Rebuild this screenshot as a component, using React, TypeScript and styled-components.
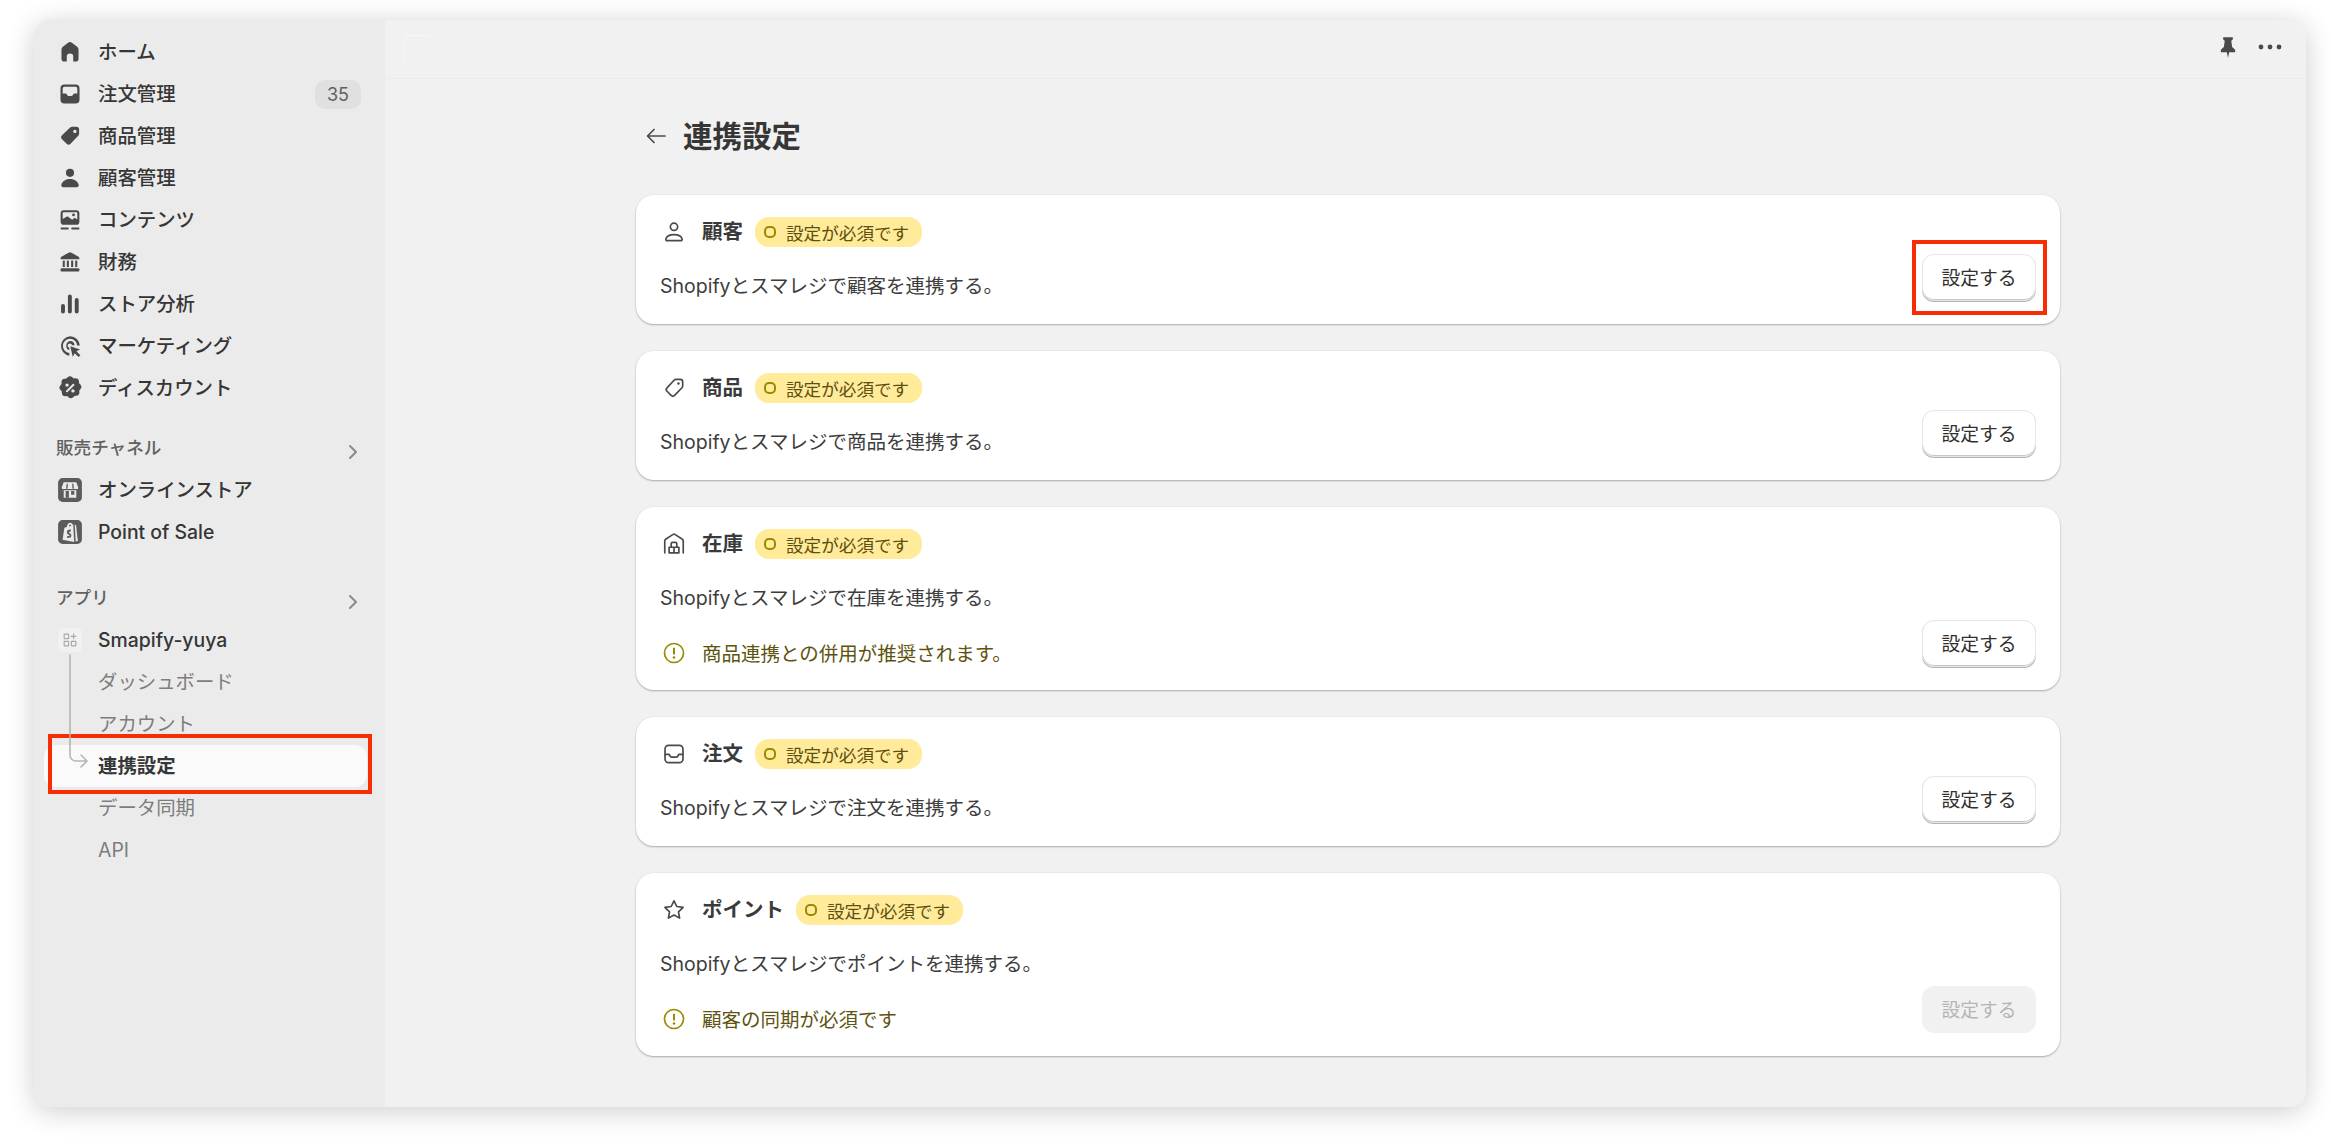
import React from "react";
import styled, { createGlobalStyle } from "styled-components";

const Global = createGlobalStyle`
  html, body { margin: 0; padding: 0; background: #fff; }
  #root { width: 2331px; height: 1148px; }
  * { box-sizing: border-box; }
  body { font-family: Inter, "Noto Sans CJK JP", sans-serif; color: #303030; overflow: hidden; }
`;

const Page = styled.div`
  width: 2331px;
  height: 1148px;
  padding: 20px 25px 41px 34px;
`;
const Win = styled.div`
  display: flex;
  height: 100%;
  border-radius: 16px;
  overflow: hidden;
  background: #f1f1f1;
  box-shadow: 0 4px 28px rgba(0, 0, 0, 0.2);
`;
const Sidebar = styled.nav`
  width: 351px;
  flex: none;
  background: #ebebeb;
  padding: 11px 18px 0 10px;
`;
const Group = styled.div<{ $mt?: number }>`
  position: relative;
  margin-top: ${(p) => p.$mt ?? 0}px;
`;
const Item = styled.div<{ $active?: boolean }>`
  position: relative;
  display: flex;
  align-items: center;
  height: 42px;
  padding: 0 6px 0 14px;
  gap: 16px;
  border-radius: 12px;
  background: ${(p) => (p.$active ? "#fafafa" : "transparent")};
`;
const IconSlot = styled.span`
  width: 24px;
  height: 24px;
  flex: none;
  display: flex;
  align-items: center;
  justify-content: center;
`;
const ItemText = styled.span<{ $sub?: boolean; $strong?: boolean }>`
  flex: 1;
  font-size: 19.4px;
  line-height: 26px;
  font-weight: ${(p) => (p.$strong ? 600 : p.$sub ? 400 : 500)};
  color: ${(p) => (p.$sub ? "#7d7d7d" : "#363636")};
`;
const SubItem = styled(Item)`
  padding-left: 54px;
`;
const Count = styled.span`
  width: 46px;
  height: 29px;
  border-radius: 10px;
  background: #e0e0e0;
  color: #616161;
  font-size: 18px;
  display: flex;
  align-items: center;
  justify-content: center;
`;
const SectionLabel = styled.div`
  display: flex;
  align-items: center;
  justify-content: space-between;
  height: 42px;
  padding: 0 2px 3px 12px;
  color: #616161;
  font-size: 17.6px;
  font-weight: 500;
`;
const Chevron = styled.svg`
  width: 24px;
  height: 24px;
  margin-top: 11px;
`;
const AppBox = styled.span`
  width: 24px;
  height: 24px;
  border-radius: 5px;
  background: #f1f1f1;
  display: flex;
  align-items: center;
  justify-content: center;
`;
const Tree = styled.svg`
  position: absolute;
  left: 23px;
  top: -7px;
  width: 40px;
  height: 122px;
`;
const Ring = styled.span<{ $inset: string }>`
  position: absolute;
  inset: ${(p) => p.$inset};
  border: 4px solid #f92d04;
  pointer-events: none;
`;
const Main = styled.main`
  flex: 1;
  min-width: 0;
`;
const TopBar = styled.header`
  height: 59px;
  border-bottom: 1px solid #ebebeb;
  display: flex;
  align-items: center;
  justify-content: space-between;
  padding: 0 23px 4px 19px;
`;
const Ghost = styled.span`
  width: 26px;
  height: 28px;
  border-left: 1px solid #f7f7f7;
  border-top: 1px solid #f7f7f7;
  border-radius: 4px 0 0 0;
  margin-top: 4px;
`;
const TopActions = styled.div`
  display: flex;
  align-items: center;
  gap: 16px;
`;
const Content = styled.div`
  padding: 37px 246px 0 251px;
`;
const TitleRow = styled.div`
  display: flex;
  align-items: center;
  height: 40px;
  gap: 15px;
  padding-left: 8px;
  margin-bottom: 39px;
`;
const Title = styled.h1`
  margin: 0;
  font-size: 29.5px;
  line-height: 40px;
  font-weight: 600;
  color: #363636;
`;
const CardList = styled.div`
  display: flex;
  flex-direction: column;
  gap: 27px;
`;
const Card = styled.section`
  display: flex;
  justify-content: space-between;
  align-items: flex-end;
  background: #fff;
  border-radius: 18px;
  padding: 22px 24px 23px;
  box-shadow: 0 1px 2px rgba(0, 0, 0, 0.28), 0 0 0 1px rgba(0, 0, 0, 0.025);
`;
const CardBody = styled.div`
  display: flex;
  flex-direction: column;
`;
const CardHead = styled.div`
  display: flex;
  align-items: center;
  height: 30px;
`;
const CardIcon = styled.span`
  width: 28px;
  height: 28px;
  flex: none;
  display: flex;
  align-items: center;
  justify-content: center;
  margin-right: 14px;
`;
const CardTitle = styled.h2`
  margin: 0 12px 0 0;
  font-size: 20.5px;
  font-weight: 600;
  color: #3a3a3a;
  line-height: 30px;
`;
const Badge = styled.span`
  display: flex;
  align-items: center;
  height: 30px;
  padding: 0 13px 0 9px;
  gap: 10px;
  border-radius: 14px;
  background: #ffeb99;
  color: #5e5012;
  font-size: 17.6px;
  font-weight: 400;
`;
const BadgeDot = styled.span`
  width: 12px;
  height: 12px;
  border-radius: 5px;
  border: 2px solid #998a00;
`;
const Desc = styled.p`
  margin: 25px 0 0;
  font-size: 19.5px;
  line-height: 29px;
  color: #3d3d3d;
`;
const Warn = styled.div`
  display: flex;
  align-items: center;
  margin-top: 25px;
  height: 29px;
  color: #5e5410;
  font-size: 19.5px;
`;
const BtnWrap = styled.div`
  position: relative;
`;
const Btn = styled.button<{ $off?: boolean }>`
  display: block;
  width: 114px;
  height: 47px;
  border-radius: 12px;
  font: 400 18.8px Inter, "Noto Sans CJK JP", sans-serif;
  padding: 0 0 3px;
  color: ${(p) => (p.$off ? "#b5b5b5" : "#303030")};
  background: ${(p) => (p.$off ? "#f1f1f1" : "#fff")};
  border: ${(p) => (p.$off ? "none" : "1px solid #e6e6e6")};
  box-shadow: ${(p) => (p.$off ? "none" : "0 1px 0 #b4b4b4, inset 0 -1px 0 #c6c6c6")};
`;

const Svg = styled.svg<{ $s?: number; $c?: string }>`
  width: ${(p) => p.$s ?? 28}px;
  height: ${(p) => p.$s ?? 28}px;
  flex: none;
  display: block;
  fill: ${(p) => p.$c ?? "#4a4a4a"};
`;
type IP = { s?: number; c?: string; children: React.ReactNode };
const I = ({ s, c, children }: IP) => (
  <Svg viewBox="0 0 20 20" $s={s} $c={c}>
    {children}
  </Svg>
);
const BG = "#ebebeb";

const icons = {
  home: (
    <I>
      <path d="M8.6 3.400a2.400 2.400 0 0 1 2.800 0l3.700 2.900a2.600 2.600 0 0 1 1 2v6.500a2 2 0 0 1-2 2h-1.800v-3.500a2.300 2.300 0 0 0-4.600 0v3.500H5.900a2 2 0 0 1-2-2V8.300a2.600 2.600 0 0 1 1-2z" />
    </I>
  ),
  inbox: (
    <I>
      <path d="M6 3.200h8A2.800 2.800 0 0 1 16.800 6v8a2.800 2.800 0 0 1-2.800 2.800H6A2.800 2.800 0 0 1 3.200 14V6A2.800 2.800 0 0 1 6 3.200z" />
      <path fill={BG} d="M6 4.800h8A1.200 1.200 0 0 1 15.200 6v3.700h-2a1.200 1.200 0 0 0-1 .6l-.3.600a1 1 0 0 1-.9.500H9a1 1 0 0 1-.9-.5l-.3-.6a1.200 1.200 0 0 0-1-.6h-2V6A1.200 1.200 0 0 1 6 4.800z" />
    </I>
  ),
  tag: (
    <I>
      <path fillRule="evenodd" d="M11.500 3.400h3a2 2 0 0 1 2 2v3a2 2 0 0 1-.6 1.400l-5.500 5.800a2 2 0 0 1-2.800 0l-3.300-3.300a2 2 0 0 1 0-2.800l5.800-5.500a2 2 0 0 1 1.400-.6zM13.500 5.500a1.200 1.200 0 1 0 0 2.400 1.200 1.200 0 0 0 0-2.400z" />
    </I>
  ),
  person: (
    <I>
      <circle cx="10" cy="6.300" r="2.900" />
      <path d="M10 10.800c3.300 0 5.600 1.800 6.200 4 .3 1-.5 1.800-1.400 1.800H5.200c-.9 0-1.700-.8-1.400-1.800.6-2.200 2.900-4 6.200-4z" />
    </I>
  ),
  content: (
    <I>
      <path fillRule="evenodd" d="M5.500 3h9A2.200 2.200 0 0 1 16.700 5.200v6A2.200 2.200 0 0 1 14.500 13.400h-9a2.200 2.200 0 0 1-2.200-2.200v-6A2.200 2.200 0 0 1 5.500 3zM4.800 9.300V5.200c0-.4.300-.7.700-.7h9c.4 0 .7.300.7.700v4.500l-1.800-1.300-1.900 1.400-3.300-2.500z" />
      <circle cx="12.500" cy="6.400" r="1" />
      <rect x="3.300" y="15.400" width="5.800" height="1.400" rx=".5" />
      <rect x="10.900" y="15.400" width="5.800" height="1.400" rx=".5" />
    </I>
  ),
  bank: (
    <I>
      <path d="M9 3.400a2 2 0 0 1 2 0l4.800 2.600c.5.300.9.800.9 1.400v.6H3.300v-.6c0-.6.400-1.100.9-1.400z" />
      <rect x="4.800" y="9" width="1.500" height="4.600" />
      <rect x="7.700" y="9" width="1.500" height="4.600" />
      <rect x="10.800" y="9" width="1.500" height="4.600" />
      <rect x="13.700" y="9" width="1.500" height="4.600" />
      <rect x="3.300" y="14.500" width="13.400" height="2.300" rx=".7" />
    </I>
  ),
  chart: (
    <I>
      <rect x="3.600" y="10" width="2.800" height="6.800" rx="1.400" />
      <rect x="8.500" y="3.200" width="2.800" height="13.600" rx="1.400" />
      <rect x="13.400" y="5.800" width="2.800" height="11" rx="1.400" />
    </I>
  ),
  target: (
    <I>
      <path d="M10 3a7 7 0 0 1 7 6.700h-1.900A5.100 5.100 0 1 0 9.500 15v1.900A7 7 0 0 1 10 3z" />
      <path d="M10 6.500a3.400 3.400 0 0 1 3.300 3h-1.800a1.600 1.600 0 1 0-2 1.800v1.700A3.400 3.400 0 0 1 10 6.500z" />
      <path d="M10.200 10.200l7 2.300-2.600 1.300 2.800 2.800-1.300 1.300-2.800-2.800-1.300 2.700z" />
    </I>
  ),
  discount: (
    <I>
      <path fillRule="evenodd" d="M8.300 2.400a2.500 2.500 0 0 1 3.400 0l.9.800 1.200-.1a2.500 2.500 0 0 1 2.600 2.300l.1 1.200.9.900a2.500 2.500 0 0 1 0 3.400l-.8.900.1 1.200a2.500 2.500 0 0 1-2.300 2.600l-1.200.1-.9.900a2.500 2.500 0 0 1-3.400 0l-.9-.8-1.200.1a2.500 2.500 0 0 1-2.600-2.300l-.1-1.200-.9-.9a2.500 2.500 0 0 1 0-3.400l.8-.9-.1-1.200a2.500 2.500 0 0 1 2.300-2.600l1.200-.1zM12.300 6.800 6.900 12.300l1 1 5.400-5.500zM7.900 6.700a1.200 1.200 0 1 0 0 2.400 1.200 1.200 0 0 0 0-2.400zM12.100 10.900a1.200 1.200 0 1 0 0 2.400 1.200 1.200 0 0 0 0-2.400z" />
    </I>
  ),
  store: (
    <I>
      <rect x="1.500" y="1.500" width="17" height="17" rx="3.200" fill="#5c5c5c" />
      <path fill="#ebebeb" d="M5.500 4.500h9l1.300 3.300a1.500 1.500 0 0 1-1.300 2v5.700h-9V9.800a1.500 1.500 0 0 1-1.300-2z" />
      <path fill="#5c5c5c" d="M7.600 5.600h.9l-.3 3.500h-1zM11.500 5.600h.9l.4 3.500h-1zM4.800 9.200h10.400v.9H4.800zM6.900 10.800h2.300v4.700H6.900zM10.800 10.800h2.300v2.600h-2.300z" />
    </I>
  ),
  pos: (
    <I>
      <rect x="1.500" y="1.500" width="17" height="17" rx="3.200" fill="#5c5c5c" />
      <path fill="#ebebeb" d="M7.700 6.400C7.900 4.700 8.900 3.400 10.200 3.400c.8 0 1.300.5 1.600 1.300l.5-.1.700 12.500-8.300-1.500L6 6.900zM9.200 6l1.700-.5c-.2-.6-.4-.9-.8-.9-.5 0-.8.600-.9 1.400z" />
      <path fill="#ebebeb" d="M13.400 4.900l.9.100 1.300 11.400-1.500.4z" />
      <path fill="#5c5c5c" d="M10.700 8.300c-1.800-.4-3 .6-2.900 2 .1 1.400 1.900 1.500 1.900 2.300 0 .5-.7.500-1.600.1l-.4 1.200c1.700.7 3.300.2 3.300-1.400 0-1.500-1.800-1.700-1.800-2.300 0-.4.500-.5 1.200-.4z" />
    </I>
  ),
  pin: (
    <I s={26}>
      <path d="M6.300 2.500h7.400v1.700l-1.200 1 .7 4.800 2.300 2.100v1.900h-4.600L10 18.500l-.9-4.500H4.500v-1.900l2.300-2.100.7-4.800-1.200-1z" />
    </I>
  ),
  dots: (
    <Svg viewBox="0 0 26 8" $s={26}>
      <circle cx="4" cy="4" r="2.400" />
      <circle cx="13" cy="4" r="2.400" />
      <circle cx="22" cy="4" r="2.400" />
    </Svg>
  ),
  apps: (
    <I s={16} c="#a8a8a8">
      <path fillRule="evenodd" d="M3 2h5a1 1 0 0 1 1 1v5a1 1 0 0 1-1 1H3a1 1 0 0 1-1-1V3a1 1 0 0 1 1-1zm.4 1.400v4.200h4.200V3.400zM3 11h5a1 1 0 0 1 1 1v5a1 1 0 0 1-1 1H3a1 1 0 0 1-1-1v-5a1 1 0 0 1 1-1zm.4 1.400v4.200h4.200v-4.200zM12 11h5a1 1 0 0 1 1 1v5a1 1 0 0 1-1 1h-5a1 1 0 0 1-1-1v-5a1 1 0 0 1 1-1zm.4 1.400v4.200h4.200v-4.200zM13.800 2h1.400v2.800H18v1.400h-2.800V9h-1.400V6.200H11V4.800h2.800z" />
    </I>
  ),
};

const line = { fill: "none", stroke: "#4a4a4a", strokeWidth: 1.2, strokeLinecap: "round", strokeLinejoin: "round" } as const;
const outline = {
  person: (
    <I>
      <circle {...line} cx="10" cy="6.300" r="2.600" />
      <path {...line} d="M5.200 16.200h9.600c.8 0 1.200-.6 1-1.200-.5-1.900-2.500-3.100-5.800-3.100s-5.300 1.200-5.800 3.100c-.2.600.2 1.200 1 1.200z" />
    </I>
  ),
  tag: (
    <I>
      <path {...line} d="M11.500 3.800h3a1.700 1.700 0 0 1 1.700 1.700v3a1.800 1.800 0 0 1-.5 1.300l-5.300 5.500a1.700 1.700 0 0 1-2.400 0l-3-3a1.700 1.700 0 0 1 0-2.400l5.200-5.600a1.800 1.800 0 0 1 1.300-.5z" />
      <circle cx="13.200" cy="6.800" r=".9" />
    </I>
  ),
  barn: (
    <I>
      <path {...line} d="M3.400 16.300V7.700a1.400 1.400 0 0 1 .6-1.100l5.100-3.300a1.600 1.600 0 0 1 1.800 0L16 6.600a1.400 1.400 0 0 1 .6 1.100v8.600" />
      <path {...line} d="M6.500 16.300v-4h7v4zM10 12.300v4M8 12.300V9.800a1 1 0 0 1 1-1h2a1 1 0 0 1 1 1v2.500" />
    </I>
  ),
  inbox: (
    <I>
      <rect {...line} x="3.600" y="3.800" width="12.800" height="12.400" rx="2.600" />
      <path {...line} d="M3.800 10.300h2.700l1 1.500c.2.300.5.400.8.400h3.400c.3 0 .6-.1.800-.4l1-1.500h2.700" />
    </I>
  ),
  star: (
    <I>
      <path {...line} d="m10 3.400 2 4.100 4.500.6-3.300 3.200.8 4.500-4-2.200-4 2.200.8-4.500L3.500 8.100l4.500-.6z" />
    </I>
  ),
  warn: (
    <I>
      <circle {...line} stroke="#998a00" cx="10" cy="10" r="6.800" />
      <path fill="#998a00" d="M9.300 6.200h1.400v4.800H9.300z" />
      <circle fill="#998a00" cx="10" cy="13.200" r=".9" />
    </I>
  ),
};

const nav: [React.ReactNode, string][] = [
  [icons.home, "ホーム"],
  [icons.inbox, "注文管理"],
  [icons.tag, "商品管理"],
  [icons.person, "顧客管理"],
  [icons.content, "コンテンツ"],
  [icons.bank, "財務"],
  [icons.chart, "ストア分析"],
  [icons.target, "マーケティング"],
  [icons.discount, "ディスカウント"],
];

type C = { icon: React.ReactNode; name: string; warn?: string; off?: boolean; ring?: boolean };
const cards: C[] = [
  { icon: outline.person, name: "顧客", ring: true },
  { icon: outline.tag, name: "商品" },
  { icon: outline.barn, name: "在庫", warn: "商品連携との併用が推奨されます。" },
  { icon: outline.inbox, name: "注文" },
  { icon: outline.star, name: "ポイント", warn: "顧客の同期が必須です", off: true },
];

const ChevronIcon = () => (
  <Chevron viewBox="0 0 24 24" fill="none" stroke="#8a8a8a" strokeWidth="2" strokeLinecap="round" strokeLinejoin="round">
    <path d="m9 6 6 6-6 6" />
  </Chevron>
);

export default function App() {
  return (
    <Page>
      <Global />
      <Win>
        <Sidebar>
          <Group>
            {nav.map(([ic, t]) => (
              <Item key={t}>
                <IconSlot>{ic}</IconSlot>
                <ItemText>{t}</ItemText>
                {t === "注文管理" && <Count>35</Count>}
              </Item>
            ))}
          </Group>
          <Group $mt={18}>
            <SectionLabel>
              販売チャネル
              <ChevronIcon />
            </SectionLabel>
            <Item>
              <IconSlot>{icons.store}</IconSlot>
              <ItemText>オンラインストア</ItemText>
            </Item>
            <Item>
              <IconSlot>{icons.pos}</IconSlot>
              <ItemText>Point of Sale</ItemText>
            </Item>
          </Group>
          <Group $mt={24}>
            <SectionLabel>
              アプリ
              <ChevronIcon />
            </SectionLabel>
            <Item>
              <AppBox>{icons.apps}</AppBox>
              <ItemText>Smapify-yuya</ItemText>
            </Item>
            <Group>
              <SubItem>
                <ItemText $sub>ダッシュボード</ItemText>
              </SubItem>
              <SubItem>
                <ItemText $sub>アカウント</ItemText>
              </SubItem>
              <SubItem $active>
                <ItemText $strong>連携設定</ItemText>
                <Ring $inset="-11px -5px -7px 4px" />
              </SubItem>
              <SubItem>
                <ItemText $sub>データ同期</ItemText>
              </SubItem>
              <SubItem>
                <ItemText $sub>API</ItemText>
              </SubItem>
              <Tree viewBox="0 0 40 122" fill="none" stroke="#b5b5b5" strokeWidth="1.600" strokeLinecap="round" strokeLinejoin="round">
                <path d="M3 1v100a6 6 0 0 0 6 6h10M14 101l6 6-6 6" />
              </Tree>
            </Group>
          </Group>
        </Sidebar>
        <Main>
          <TopBar>
            <Ghost />
            <TopActions>
              {icons.pin}
              {icons.dots}
            </TopActions>
          </TopBar>
          <Content>
            <TitleRow>
              <Svg viewBox="0 0 24 24" $s={24} $c="none">
                <path fill="none" stroke="#4a4a4a" strokeWidth="1.700" strokeLinecap="round" strokeLinejoin="round" d="M21 12H4M10 5.500 3.500 12l6.500 6.500" />
              </Svg>
              <Title>連携設定</Title>
            </TitleRow>
            <CardList>
              {cards.map((c) => (
                <Card key={c.name}>
                  <CardBody>
                    <CardHead>
                      <CardIcon>{c.icon}</CardIcon>
                      <CardTitle>{c.name}</CardTitle>
                      <Badge>
                        <BadgeDot />
                        設定が必須です
                      </Badge>
                    </CardHead>
                    <Desc>Shopifyとスマレジで{c.name}を連携する。</Desc>
                    {c.warn && (
                      <Warn>
                        <CardIcon>{outline.warn}</CardIcon>
                        {c.warn}
                      </Warn>
                    )}
                  </CardBody>
                  <BtnWrap>
                    <Btn $off={c.off}>設定する</Btn>
                    {c.ring && <Ring $inset="-14px -11px -14px -10px" />}
                  </BtnWrap>
                </Card>
              ))}
            </CardList>
          </Content>
        </Main>
      </Win>
    </Page>
  );
}
